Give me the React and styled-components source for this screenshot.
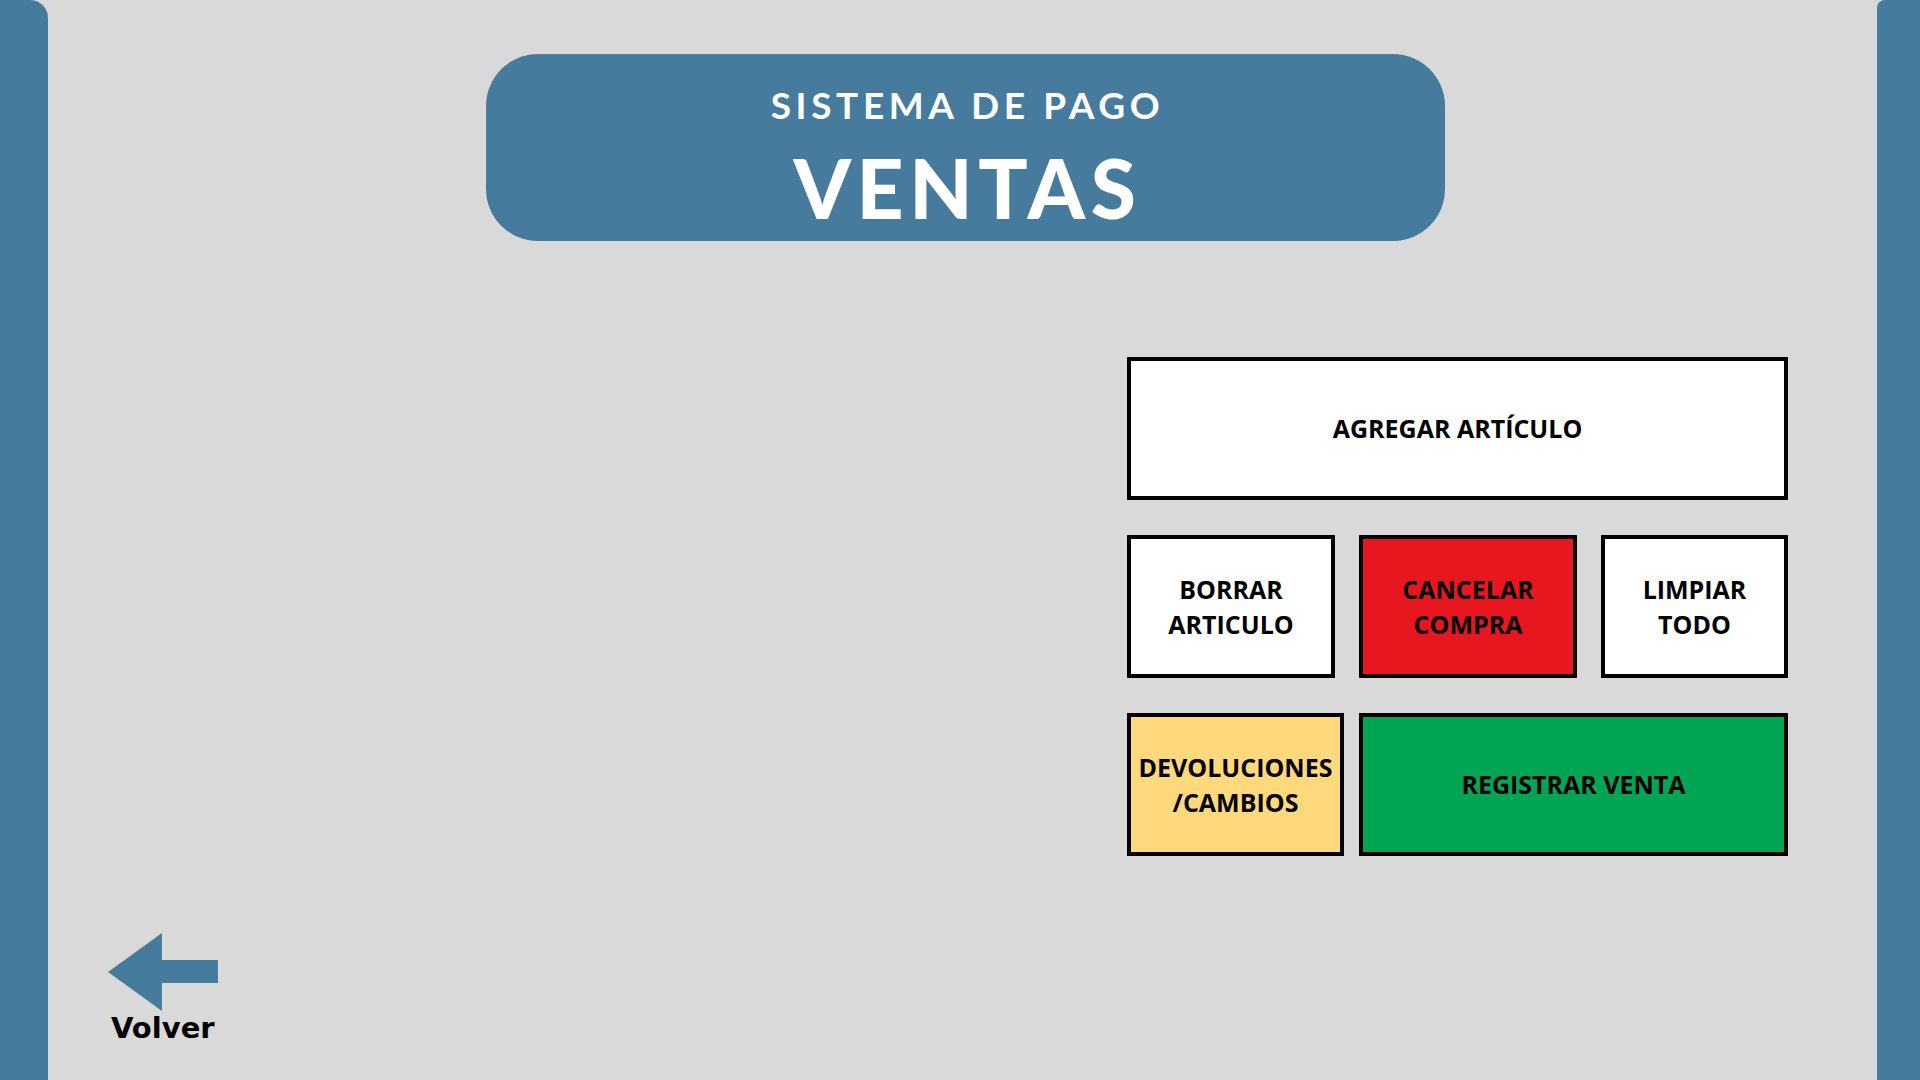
import React from "react";
import styled, { createGlobalStyle } from "styled-components";

const GlobalStyle = createGlobalStyle`
  html, body {
    margin: 0;
    padding: 0;
    background: #d9d9d9;
  }
  * {
    box-sizing: border-box;
  }
`;

const Page = styled.div`
  display: flex;
  width: 1920px;
  height: 1080px;
  overflow: hidden;
  background: #d9d9d9;
`;

const SideBar = styled.div`
  flex: 0 0 ${(p) => p.$width}px;
  background: #457b9d;
  border-top-right-radius: ${(p) => (p.$side === "left" ? "18px" : "0")};
  border-top-left-radius: ${(p) => (p.$side === "right" ? "8px" : "0")};
`;

const Main = styled.div`
  flex: 1;
  display: flex;
  flex-direction: column;
  padding-top: 54px;
`;

const Banner = styled.div`
  align-self: center;
  margin-left: 6px;
  width: 959px;
  height: 187px;
  background: #467b9e;
  border-radius: 52px;
  display: flex;
  flex-direction: column;
  align-items: center;
  color: #ffffff;
  font-family: "Lato", "Liberation Sans", sans-serif;
  padding-top: 29px;
`;

const Subtitle = styled.div`
  font-size: 37px;
  font-weight: 700;
  letter-spacing: 4.6px;
  line-height: 44px;
  margin-left: 4px;
`;

const Title = styled.div`
  font-size: 82px;
  font-weight: 900;
  letter-spacing: 5.6px;
  line-height: 90px;
  margin-top: 15px;
  margin-left: 4px;
`;

const Panel = styled.div`
  align-self: flex-end;
  margin-right: 89px;
  margin-top: 116px;
  width: 661px;
  display: flex;
  flex-direction: column;
  gap: 35px;
`;

const ButtonRow = styled.div`
  display: flex;
  gap: ${(p) => p.$gap}px;
`;

const ActionButton = styled.button`
  flex: ${(p) => (p.$width ? `0 0 ${p.$width}px` : "1")};
  height: 143px;
  border: 4px solid #000000;
  border-radius: 0;
  background: ${(p) => p.$bg || "#ffffff"};
  color: #000000;
  font-family: "Open Sans", "Liberation Sans", sans-serif;
  font-weight: 700;
  font-size: 25px;
  line-height: 35px;
  text-align: center;
  padding: 0;
  cursor: pointer;
  white-space: pre-line;
`;

const BackLink = styled.div`
  margin-top: 77px;
  margin-left: 60px;
  width: 110px;
  display: flex;
  flex-direction: column;
  align-items: flex-start;
  cursor: pointer;
`;

const BackLabel = styled.div`
  font-family: "DejaVu Sans", "Liberation Sans", sans-serif;
  font-weight: 700;
  font-size: 29px;
  line-height: 34px;
  color: #000000;
  margin-left: 3px;
  margin-top: 0;
`;

function BackArrow() {
  return (
    <svg width="110" height="78" viewBox="0 0 110 78">
      <polygon
        points="0,39 54,0 54,27 110,27 110,50 54,50 54,78"
        fill="#457b9d"
      />
    </svg>
  );
}

export default function App() {
  return (
    <>
      <GlobalStyle />
      <Page>
        <SideBar $side="left" $width={48} />
        <Main>
          <Banner>
            <Subtitle>SISTEMA DE PAGO</Subtitle>
            <Title>VENTAS</Title>
          </Banner>
          <Panel>
            <ButtonRow $gap={0}>
              <ActionButton>AGREGAR ARTÍCULO</ActionButton>
            </ButtonRow>
            <ButtonRow $gap={24}>
              <ActionButton $width={208}>{"BORRAR\nARTICULO"}</ActionButton>
              <ActionButton $width={218} $bg="#e8171f">
                {"CANCELAR\nCOMPRA"}
              </ActionButton>
              <ActionButton>{"LIMPIAR\nTODO"}</ActionButton>
            </ButtonRow>
            <ButtonRow $gap={15}>
              <ActionButton $width={217} $bg="#ffd97b">
                {"DEVOLUCIONES\n/CAMBIOS"}
              </ActionButton>
              <ActionButton $bg="#00a553">REGISTRAR VENTA</ActionButton>
            </ButtonRow>
          </Panel>
          <BackLink>
            <BackArrow />
            <BackLabel>Volver</BackLabel>
          </BackLink>
        </Main>
        <SideBar $side="right" $width={43} />
      </Page>
    </>
  );
}
